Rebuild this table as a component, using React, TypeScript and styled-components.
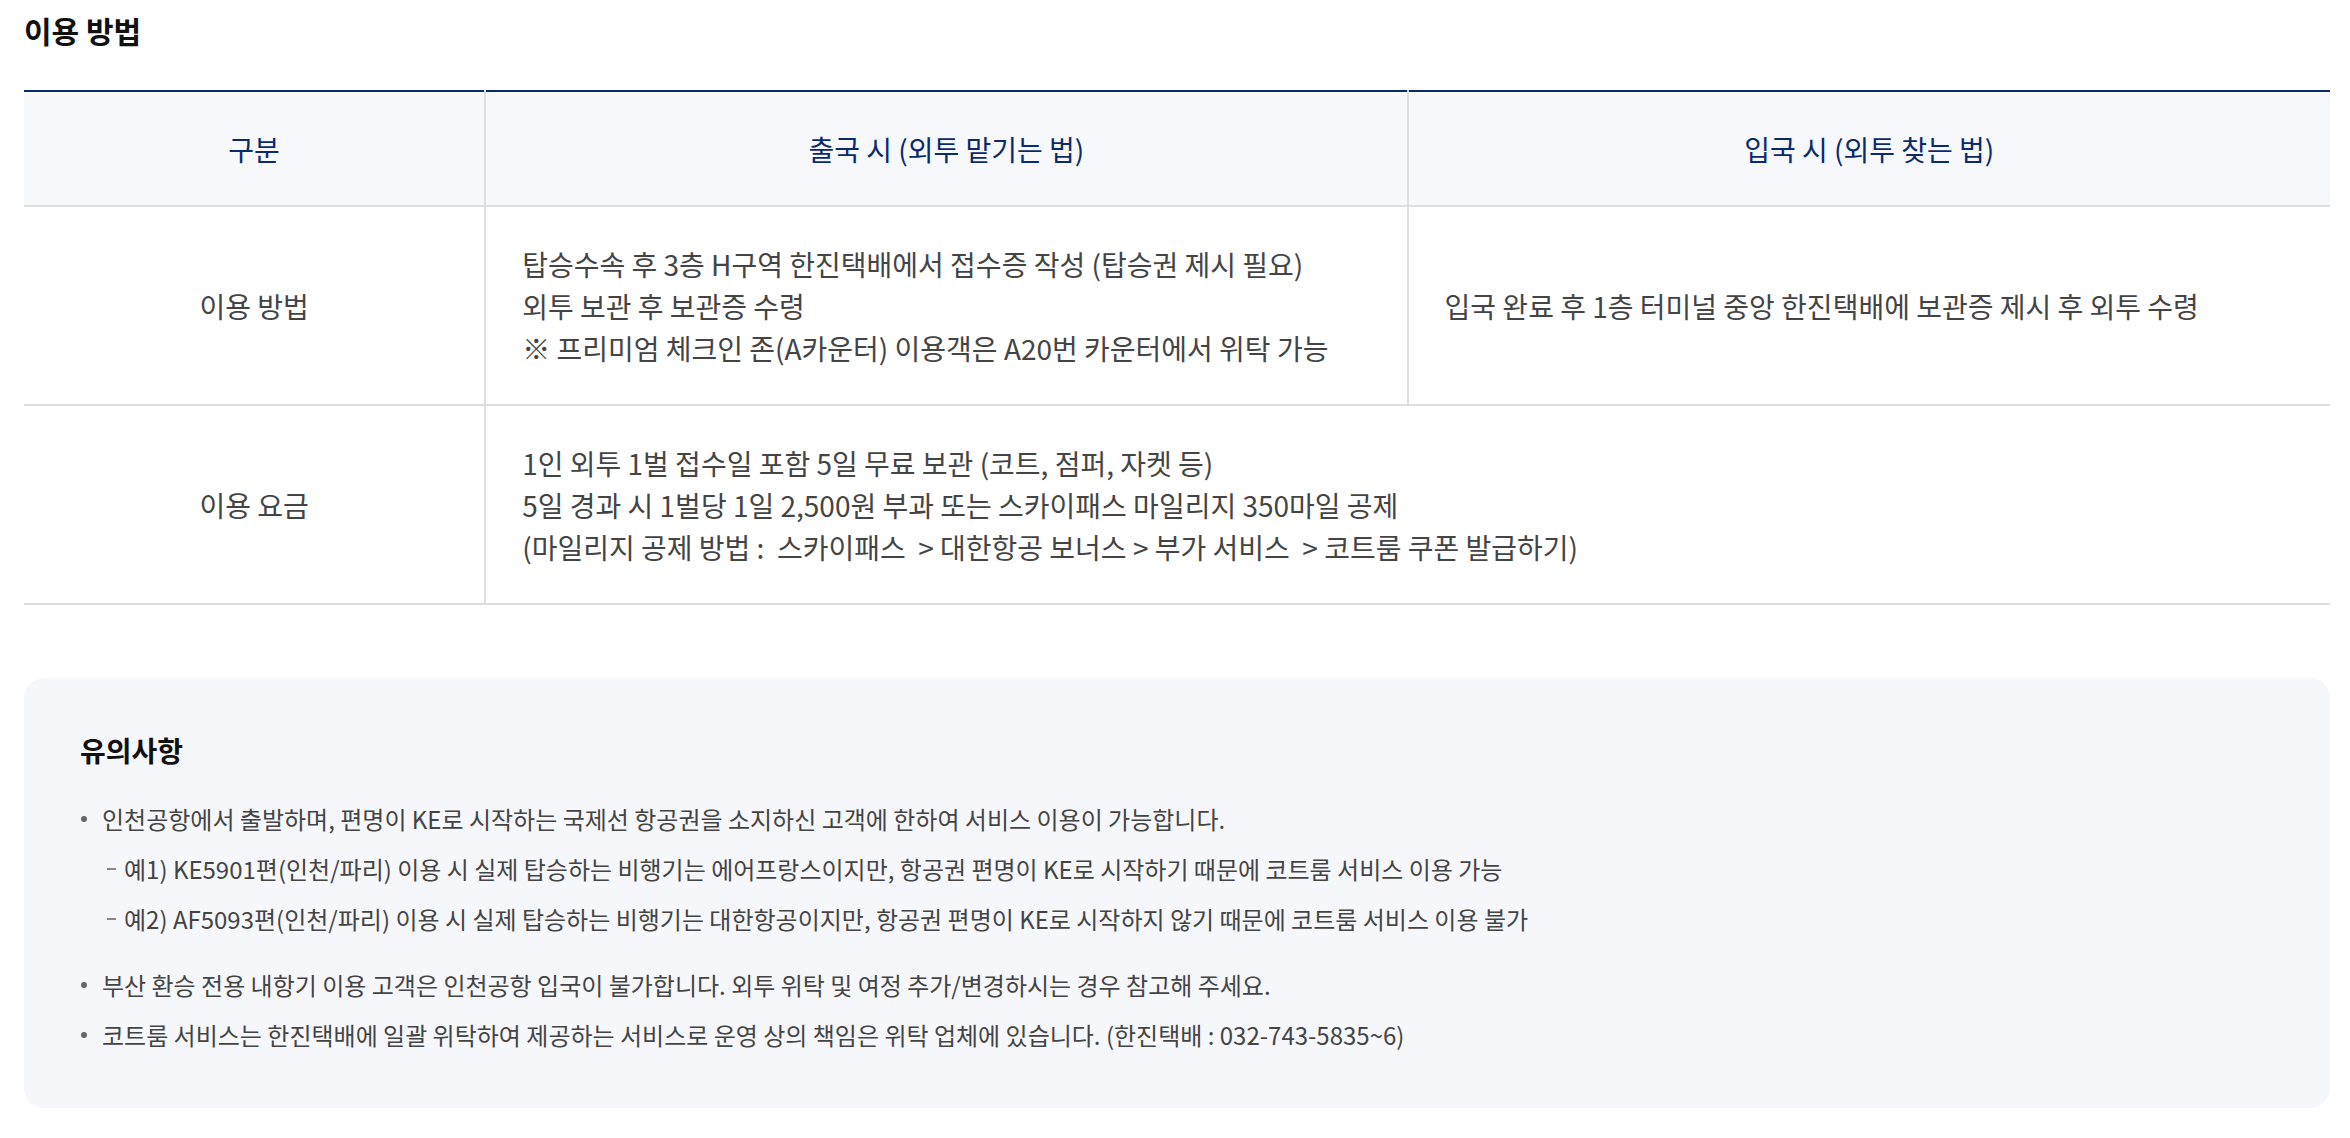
import React from "react";
import styled, { createGlobalStyle } from "styled-components";

const GlobalStyle = createGlobalStyle`
  body {
    margin: 0;
    background: #fff;
    font-family: "Noto Sans CJK KR", "Noto Sans", sans-serif;
    color: #444;
  }
`;

interface UsageRow {
  label: string;
  lines: string[];
  arrival?: string[];
}

const rows: UsageRow[] = [
  {
    label: "이용 방법",
    lines: [
      "탑승수속 후 3층 H구역 한진택배에서 접수증 작성 (탑승권 제시 필요)",
      "외투 보관 후 보관증 수령",
      "※ 프리미엄 체크인 존(A카운터) 이용객은 A20번 카운터에서 위탁 가능",
    ],
    arrival: ["입국 완료 후 1층 터미널 중앙 한진택배에 보관증 제시 후 외투 수령"],
  },
  {
    label: "이용 요금",
    lines: [
      "1인 외투 1벌 접수일 포함 5일 무료 보관 (코트, 점퍼, 자켓 등)",
      "5일 경과 시 1벌당 1일 2,500원 부과 또는 스카이패스 마일리지 350마일 공제",
      "(마일리지 공제 방법 :\u00a0 스카이패스\u00a0 > 대한항공 보너스 > 부가 서비스\u00a0 > 코트룸 쿠폰 발급하기)",
    ],
  },
];

const App = () => {
  return (
    <Page>
      <GlobalStyle />
      <Title>이용 방법</Title>
      <Table>
        <colgroup>
          <col style={{ width: "20%" }} />
          <col style={{ width: "40%" }} />
          <col style={{ width: "40%" }} />
        </colgroup>
        <thead>
          <tr>
            <HeadCell>구분</HeadCell>
            <HeadCell>출국 시 (외투 맡기는 법)</HeadCell>
            <HeadCell>입국 시 (외투 찾는 법)</HeadCell>
          </tr>
        </thead>
        <tbody>
          {rows.map((row) => (
            <tr key={row.label}>
              <LabelCell>{row.label}</LabelCell>
              <Cell colSpan={row.arrival ? 1 : 2}>
                {row.lines.map((l) => (
                  <Line key={l}>{l}</Line>
                ))}
              </Cell>
              {row.arrival && (
                <Cell>
                  {row.arrival.map((l) => (
                    <Line key={l}>{l}</Line>
                  ))}
                </Cell>
              )}
            </tr>
          ))}
        </tbody>
      </Table>

      <NoticeBox>
        <NoticeTitle>유의사항</NoticeTitle>
        <BulletList>
          <BulletItem>
            인천공항에서 출발하며, 편명이 KE로 시작하는 국제선 항공권을 소지하신 고객에 한하여 서비스 이용이 가능합니다.
            <SubList>
              <SubItem>예1) KE5901편(인천/파리) 이용 시 실제 탑승하는 비행기는 에어프랑스이지만, 항공권 편명이 KE로 시작하기 때문에 코트룸 서비스 이용 가능</SubItem>
              <SubItem>예2) AF5093편(인천/파리) 이용 시 실제 탑승하는 비행기는 대한항공이지만, 항공권 편명이 KE로 시작하지 않기 때문에 코트룸 서비스 이용 불가</SubItem>
            </SubList>
          </BulletItem>
          <BulletItem>부산 환승 전용 내항기 이용 고객은 인천공항 입국이 불가합니다. 외투 위탁 및 여정 추가/변경하시는 경우 참고해 주세요.</BulletItem>
          <BulletItem>코트룸 서비스는 한진택배에 일괄 위탁하여 제공하는 서비스로 운영 상의 책임은 위탁 업체에 있습니다. (한진택배 : 032-743-5835~6)</BulletItem>
        </BulletList>
      </NoticeBox>
    </Page>
  );
};

const Page = styled.div`
  padding: 10px 20px 28px 24px;
`;

const Title = styled.h2`
  margin: 0 0 40px;
  font-size: 30px;
  line-height: 40px;
  font-weight: 700;
  color: #111;
`;

const Table = styled.table`
  width: 100%;
  border-collapse: collapse;
  table-layout: fixed;
  border-top: 2px solid #0b2a6c;
  border-bottom: 2px solid #dedede;
`;

const HeadCell = styled.th`
  padding: 36px 36px 35px;
  background: #f6f8fc;
  color: #0b2a6c;
  font-size: 28px;
  line-height: 42px;
  font-weight: 400;
  text-align: center;
  border-bottom: 2px solid #dedede;
  border-left: 2px solid #dedede;

  &:first-child {
    border-left: none;
  }
`;

const Cell = styled.td`
  padding: 36px 36px 35px;
  font-size: 28px;
  line-height: 42px;
  color: #444;
  text-align: left;
  vertical-align: middle;
  border-bottom: 2px solid #dedede;
  border-left: 2px solid #dedede;
`;

const LabelCell = styled(Cell)`
  text-align: center;
  border-left: none;
`;

const Line = styled.p`
  margin: 0;
`;

const NoticeBox = styled.section`
  margin-top: 73px;
  padding: 54px 56px 56px;
  background: #f6f7fb;
  border-radius: 20px;
`;

const NoticeTitle = styled.h3`
  margin: 0 0 34px;
  font-size: 28px;
  line-height: 36px;
  font-weight: 700;
  color: #111;
`;

const BulletList = styled.ul`
  margin: 0;
  padding: 0;
  list-style: none;
  display: flex;
  flex-direction: column;
  gap: 16px;
`;

const BulletItem = styled.li`
  position: relative;
  padding-left: 22px;
  font-size: 24px;
  line-height: 34px;
  color: #444;

  &::before {
    content: "";
    position: absolute;
    left: 1px;
    top: 14px;
    width: 6px;
    height: 6px;
    border-radius: 50%;
    background: #666;
  }
`;

const SubList = styled.ul`
  margin: 16px 0;
  padding: 0;
  list-style: none;
  display: flex;
  flex-direction: column;
  gap: 16px;
`;

const SubItem = styled.li`
  position: relative;
  padding-left: 22px;

  &::before {
    content: "";
    position: absolute;
    left: 5px;
    top: 16px;
    width: 9px;
    height: 2px;
    background: #888;
  }
`;

export default App;
